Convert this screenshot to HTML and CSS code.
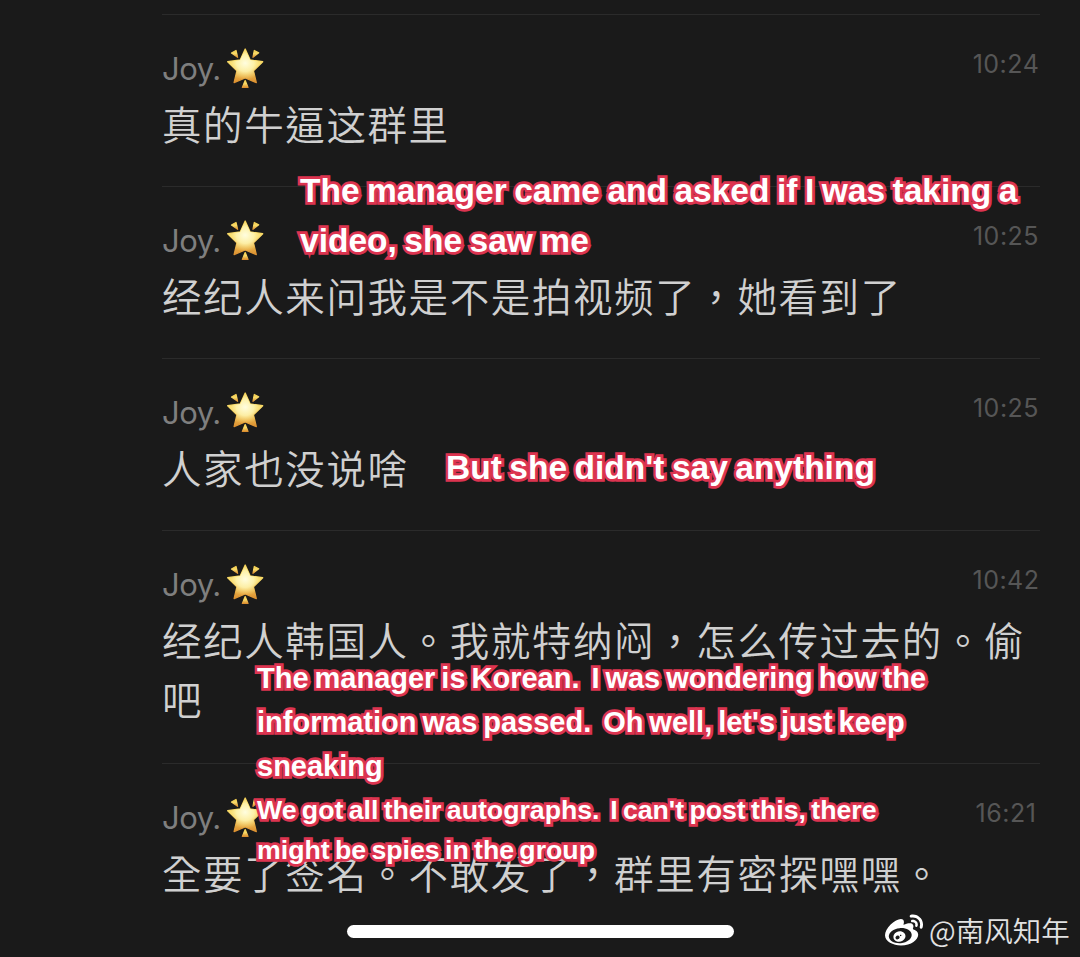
FILE: index.html
```html
<!DOCTYPE html>
<html lang="zh-TW">
<head>
    <meta charset="UTF-8">
    <title>Joy.</title>
    <link rel="stylesheet" href="styles.css">
</head>
<body>
<svg class="defs" width="0" height="0">
    <defs>
        <linearGradient id="gold" x1="0" y1="0" x2="0" y2="1">
            <stop offset="0" stop-color="#f3cd50"/>
            <stop offset="0.45" stop-color="#f9db68"/>
            <stop offset="1" stop-color="#dc9030"/>
        </linearGradient>
        <radialGradient id="shine" cx="0.5" cy="0.42" r="0.5">
            <stop offset="0" stop-color="#fffde0"/>
            <stop offset="0.5" stop-color="#fff6b4" stop-opacity="0.85"/>
            <stop offset="1" stop-color="#fbe27a" stop-opacity="0"/>
        </radialGradient>
        <symbol id="star" viewBox="0 0 38 40">
            <path class="ray" d="M5.500 5 L10 2.500 L11.600 9.300 Z"/>
            <path class="ray" d="M32.700 4.800 L28.300 2.500 L27 9.300 Z"/>
            <path class="ray" d="M19.200 32.500 L22 39.400 H16.400 Z"/>
            <path class="body" d="M19.200 1 L24.200 12 L36.700 13.700 L27.500 22.800 L30.300 34.600 L19.200 30 L8.100 34.600 L10.900 22.800 L1.700 13.700 L14.200 12 Z"/>
            <path class="glow" d="M19.200 1 L24.200 12 L36.700 13.700 L27.500 22.800 L30.300 34.600 L19.200 30 L8.100 34.600 L10.900 22.800 L1.700 13.700 L14.200 12 Z"/>
        </symbol>
    </defs>
</svg>

<ul class="chat">
    <li>
        <div class="head">
            <span class="name">Joy.</span><svg class="star"><use href="#star"/></svg>
            <span class="time">10:24</span>
        </div>
        <p>真的牛逼这群里</p>
    </li>
    <li>
        <div class="head">
            <span class="name">Joy.</span><svg class="star"><use href="#star"/></svg>
            <span class="time">10:25</span>
        </div>
        <p>经纪人来问我是不是拍视频了，她看到了</p>
    </li>
    <li>
        <div class="head">
            <span class="name">Joy.</span><svg class="star"><use href="#star"/></svg>
            <span class="time">10:25</span>
        </div>
        <p>人家也没说啥</p>
    </li>
    <li class="long">
        <div class="head">
            <span class="name">Joy.</span><svg class="star"><use href="#star"/></svg>
            <span class="time">10:42</span>
        </div>
        <p>经纪人韩国人。我就特纳闷，怎么传过去的。偷吧</p>
    </li>
    <li>
        <div class="head">
            <span class="name">Joy.</span><svg class="star"><use href="#star"/></svg>
            <span class="time">16:21</span>
        </div>
        <p>全要了签名。不敢发了，群里有密探嘿嘿。</p>
    </li>
</ul>

<!-- translations laid over the chat -->
<div class="note note1">The manager came and asked if I was taking a<br>video, she saw me</div>
<div class="note note2">But she didn't say anything</div>
<div class="note note3">The manager is Korean.&nbsp; I was wondering how the<br>information was passed.&nbsp; Oh well, let's just keep<br>sneaking</div>
<div class="note note4">We got all their autographs.&nbsp; I can't post this, there<br>might be spies in the group</div>

<div class="bar"></div>

<div class="mark">
    <svg viewBox="0 0 24 24"><path d="M10.098 20.323c-3.977.391-7.414-1.406-7.672-4.020-.259-2.609 2.759-5.047 6.740-5.441 3.979-.394 7.413 1.404 7.671 4.018.259 2.600-2.759 5.049-6.737 5.439l-.002.004zM9.050 17.219c-.384.616-1.208.884-1.829.602-.612-.279-.793-.991-.406-1.593.379-.595 1.176-.861 1.793-.601.622.263.820.972.442 1.592zm1.270-1.627c-.141.237-.449.353-.689.253-.236-.090-.313-.361-.177-.586.138-.227.436-.346.672-.240.239.090.315.360.180.601l.014-.028zm.176-2.719c-1.893-.493-4.033.450-4.857 2.118-.836 1.704-.026 3.591 1.886 4.210 1.983.640 4.318-.341 5.132-2.179.800-1.793-.201-3.642-2.161-4.149zm7.563-1.224c-.346-.105-.570-.180-.405-.615.375-.977.420-1.804 0-2.404-.781-1.112-2.915-1.053-5.364-.030 0 0-.766.331-.571-.271.376-1.217.315-2.224-.270-2.809-1.338-1.337-4.869.045-7.888 3.080C1.309 10.870 0 13.273 0 15.348c0 3.981 5.099 6.395 10.086 6.395 6.536 0 10.888-3.801 10.888-6.820 0-1.822-1.547-2.854-2.915-3.284v.010zm1.908-5.092c-.766-.856-1.908-1.187-2.960-.962-.436.090-.706.511-.616.932.090.420.511.691.932.602.511-.105 1.067.044 1.442.465.376.421.466.977.316 1.473-.136.406.089.856.510.992.405.119.857-.105.992-.512.330-1.021.120-2.178-.646-3.035l.030.045zm2.418-2.195c-1.576-1.757-3.905-2.419-6.054-1.968-.496.104-.812.587-.706 1.081.104.496.586.813 1.082.707 1.532-.331 3.185.150 4.296 1.383 1.112 1.246 1.429 2.943.947 4.416-.165.480.106 1.007.586 1.157.479.165.991-.104 1.157-.586.675-2.088.241-4.478-1.338-6.235l.030.045z"/></svg>
    <span>@南风知年</span>
</div>
</body>
</html>
```
FILE: styles.css
```css
html, body, ul, li, p {
    margin: 0;
    padding: 0;
}

body {
    position: relative;
    height: 957px;
    overflow: hidden;
    background: #1a1a1a;
    font-family: Inter, "Noto Sans CJK TC", sans-serif;
}

.defs {
    position: absolute;
}

.chat {
    padding: 14px 40px 0 162px;
    list-style: none;
}

.chat li {
    box-sizing: border-box;
    height: 172px;
    padding-top: 31px;
    border-top: 1px solid #2b2b2b;
}

.chat .long {
    height: 233px;
}

.head {
    display: flex;
    height: 47px;
    color: #7f7f7f;
}

.name {
    width: 64px;
    font-size: 31px;
    font-weight: 400;
    line-height: 46px;
    letter-spacing: -0.5px;
}

.star {
    width: 38px;
    height: 40px;
    margin-top: 1.5px;
}

.ray, .body {
    fill: url(#gold);
    stroke: url(#gold);
    stroke-width: 1.3;
    stroke-linejoin: round;
}

.glow {
    fill: url(#shine);
}

.time {
    width: 68px;
    margin-left: auto;
    color: #565656;
    font-size: 25px;
    line-height: 36px;
    letter-spacing: 0.5px;
    text-align: center;
    white-space: nowrap;
}

.chat p {
    color: #d0d0d0;
    font-family: "Noto Sans CJK TC", "Noto Sans CJK SC", sans-serif;
    font-size: 39.5px;
    font-weight: 350;
    line-height: 59px;
    letter-spacing: 1.6px;
    margin-right: -10px;
}

.note {
    position: absolute;
    color: #fff;
    font-family: "Liberation Sans", Arial, sans-serif;
    font-weight: bold;
    white-space: nowrap;
    -webkit-text-stroke: 5.5px #dc3450;
    paint-order: stroke fill;
}

.note1 {
    left: 300px;
    top: 166px;
    font-size: 33.5px;
    line-height: 50px;
    word-spacing: -1.8px;
}

.note2 {
    left: 446px;
    top: 443px;
    font-size: 33.5px;
    line-height: 50px;
    word-spacing: -1.8px;
}

.note3 {
    left: 257px;
    top: 656px;
    font-size: 29px;
    line-height: 44px;
    word-spacing: -2.1px;
}

.note4 {
    left: 257px;
    top: 790px;
    font-size: 26.7px;
    line-height: 40px;
    word-spacing: -2.1px;
}

.bar {
    position: absolute;
    left: 347px;
    top: 925px;
    width: 387px;
    height: 13px;
    border-radius: 7px;
    background: #fff;
}

.mark {
    position: absolute;
    left: 885px;
    top: 909px;
    display: flex;
    color: #e2e2e2;
    font-family: "Noto Sans CJK SC", sans-serif;
    font-size: 28.5px;
    font-weight: 350;
    line-height: 41px;
}

.mark svg {
    width: 38px;
    height: 38px;
    margin: 2px 6px 0 0;
    fill: #fff;
}
```
